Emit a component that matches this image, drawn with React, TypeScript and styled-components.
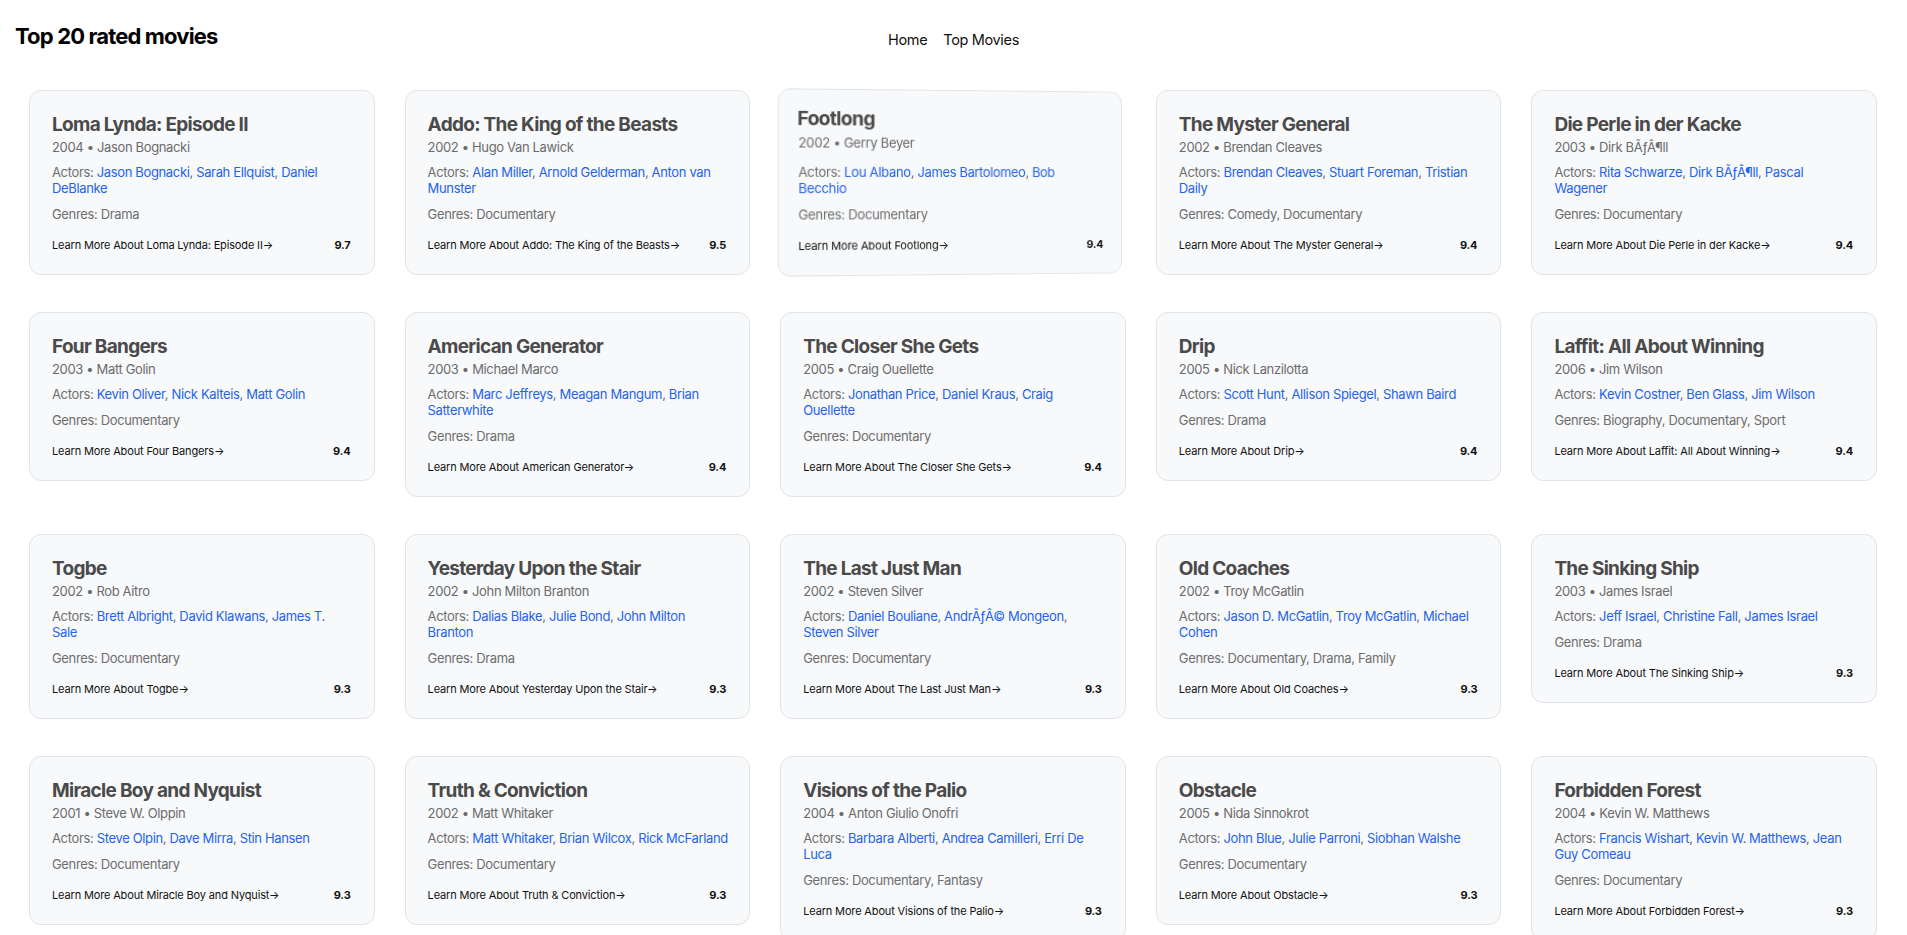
import React from 'react';
import styled, {createGlobalStyle} from 'styled-components';

const GlobalStyle = createGlobalStyle`
  html {
    scrollbar-width: none;
  }
  html::-webkit-scrollbar {
    display: none;
  }
  body {
    margin: 0;
    background: #FFFFFF;
    font-family: Inter, "Noto Sans", "Liberation Sans", sans-serif;
    color: #111111;
  }
`;

const Header = styled.header`
  display: grid;
  grid-template-columns: 1fr auto 1fr;
  align-items: start;
  padding: 0 15px;
  height: 90px;

  > h1 {
    margin: 23px 0 0;
    font-size: 22px;
    font-weight: 700;
    letter-spacing: -0.85px;
    color: #000000;
  }
`;

const Nav = styled.nav`
  display: flex;
  gap: 16px;
  margin-top: 31px;

  > a {
    font-size: 14.5px;
    letter-spacing: -0.35px;
    color: #111111;
    text-decoration: none;
  }
`;

const Grid = styled.main`
  display: grid;
  grid-template-columns: repeat(5, 1fr);
  column-gap: 30px;
  row-gap: 37px;
  align-items: start;
  padding: 0 30px 40px 29px;
`;

// the hovered card is shown tilted, as in the screenshot
const Card = styled.article<{ $tilted?: boolean }>`
  background: #F8F9FB;
  border: 1px solid #E2E3E6;
  border-radius: 12px;
  padding: 22px 20.75px 22px ${p => p.$tilted ? '19px' : '22px'};
  transform: ${p => p.$tilted ? 'perspective(1000px) rotateY(6deg)' : 'none'};
`;

const Title = styled.h2<{ $tilted?: boolean }>`
  margin: 0;
  font-size: 19px;
  line-height: 24px;
  font-weight: 700;
  letter-spacing: -0.7px;
  color: #4A4A4A;
  transform: ${p => p.$tilted ? 'translate(-1px, -5px)' : 'none'};
`;

const Meta = styled.p<{ $tilted?: boolean }>`
  margin: 2px 0 0;
  font-size: 13px;
  line-height: 16px;
  letter-spacing: -0.35px;
  color: #6B6B6B;
  transform: ${p => p.$tilted ? 'translateY(-4px)' : 'none'};
`;

const Info = styled.p`
  margin: 9px 0 0;
  font-size: 13px;
  line-height: 16px;
  letter-spacing: -0.35px;
  color: #6E6E6E;

  & + & {
    margin-top: 10px;
  }

  > a {
    color: #2563EB;
    text-decoration: none;
  }
`;

const Footer = styled.div<{ $tilted?: boolean }>`
  display: flex;
  justify-content: space-between;
  align-items: baseline;
  margin-top: 17px;
  margin-right: ${p => p.$tilted ? '-5px' : '0'};
  padding-right: 1.25px;
  font-size: 11px;
  line-height: 13px;
  letter-spacing: -0.15px;

  > a {
    color: #111111;
    text-decoration: none;
  }

  > b {
    font-weight: 700;
    color: #111111;
    margin-right: 1px;
  }
`;

type Movie = {
    title: string;
    year: number;
    director: string;
    actors: string[];
    genres: string;
    rating: string;
};

const movies: Movie[] = [
    {title: 'Loma Lynda: Episode II', year: 2004, director: 'Jason Bognacki', actors: ['Jason Bognacki', 'Sarah Ellquist', 'Daniel DeBlanke'], genres: 'Drama', rating: '9.7'},
    {title: 'Addo: The King of the Beasts', year: 2002, director: 'Hugo Van Lawick', actors: ['Alan Miller', 'Arnold Gelderman', 'Anton van Munster'], genres: 'Documentary', rating: '9.5'},
    {title: 'Footlong', year: 2002, director: 'Gerry Beyer', actors: ['Lou Albano', 'James Bartolomeo', 'Bob Becchio'], genres: 'Documentary', rating: '9.4'},
    {title: 'The Myster General', year: 2002, director: 'Brendan Cleaves', actors: ['Brendan Cleaves', 'Stuart Foreman', 'Tristian Daily'], genres: 'Comedy, Documentary', rating: '9.4'},
    {title: 'Die Perle in der Kacke', year: 2003, director: 'Dirk BÃƒÂ¶ll', actors: ['Rita Schwarze', 'Dirk BÃƒÂ¶ll', 'Pascal Wagener'], genres: 'Documentary', rating: '9.4'},
    {title: 'Four Bangers', year: 2003, director: 'Matt Golin', actors: ['Kevin Oliver', 'Nick Kalteis', 'Matt Golin'], genres: 'Documentary', rating: '9.4'},
    {title: 'American Generator', year: 2003, director: 'Michael Marco', actors: ['Marc Jeffreys', 'Meagan Mangum', 'Brian Satterwhite'], genres: 'Drama', rating: '9.4'},
    {title: 'The Closer She Gets', year: 2005, director: 'Craig Ouellette', actors: ['Jonathan Price', 'Daniel Kraus', 'Craig Ouellette'], genres: 'Documentary', rating: '9.4'},
    {title: 'Drip', year: 2005, director: 'Nick Lanzilotta', actors: ['Scott Hunt', 'Allison Spiegel', 'Shawn Baird'], genres: 'Drama', rating: '9.4'},
    {title: 'Laffit: All About Winning', year: 2006, director: 'Jim Wilson', actors: ['Kevin Costner', 'Ben Glass', 'Jim Wilson'], genres: 'Biography, Documentary, Sport', rating: '9.4'},
    {title: 'Togbe', year: 2002, director: 'Rob Aitro', actors: ['Brett Albright', 'David Klawans', 'James T. Sale'], genres: 'Documentary', rating: '9.3'},
    {title: 'Yesterday Upon the Stair', year: 2002, director: 'John Milton Branton', actors: ['Dalias Blake', 'Julie Bond', 'John Milton Branton'], genres: 'Drama', rating: '9.3'},
    {title: 'The Last Just Man', year: 2002, director: 'Steven Silver', actors: ['Daniel Bouliane', 'AndrÃƒÂ© Mongeon', 'Steven Silver'], genres: 'Documentary', rating: '9.3'},
    {title: 'Old Coaches', year: 2002, director: 'Troy McGatlin', actors: ['Jason D. McGatlin', 'Troy McGatlin', 'Michael Cohen'], genres: 'Documentary, Drama, Family', rating: '9.3'},
    {title: 'The Sinking Ship', year: 2003, director: 'James Israel', actors: ['Jeff Israel', 'Christine Fall', 'James Israel'], genres: 'Drama', rating: '9.3'},
    {title: 'Miracle Boy and Nyquist', year: 2001, director: 'Steve W. Olppin', actors: ['Steve Olpin', 'Dave Mirra', 'Stin Hansen'], genres: 'Documentary', rating: '9.3'},
    {title: 'Truth & Conviction', year: 2002, director: 'Matt Whitaker', actors: ['Matt Whitaker', 'Brian Wilcox', 'Rick McFarland'], genres: 'Documentary', rating: '9.3'},
    {title: 'Visions of the Palio', year: 2004, director: 'Anton Giulio Onofri', actors: ['Barbara Alberti', 'Andrea Camilleri', 'Erri De Luca'], genres: 'Documentary, Fantasy', rating: '9.3'},
    {title: 'Obstacle', year: 2005, director: 'Nida Sinnokrot', actors: ['John Blue', 'Julie Parroni', 'Siobhan Walshe'], genres: 'Documentary', rating: '9.3'},
    {title: 'Forbidden Forest', year: 2004, director: 'Kevin W. Matthews', actors: ['Francis Wishart', 'Kevin W. Matthews', 'Jean Guy Comeau'], genres: 'Documentary', rating: '9.3'},
];

const MovieCard: React.FunctionComponent<{ movie: Movie, tilted?: boolean }> = ({movie, tilted}) => {
    return (
        <Card $tilted={tilted}>
            <Title $tilted={tilted}>{movie.title}</Title>
            <Meta $tilted={tilted}>{movie.year} • {movie.director}</Meta>
            <Info>
                Actors:{' '}
                {movie.actors.map((a, i) => (
                    <React.Fragment key={a}>
                        <a href="#">{a}</a>{i < movie.actors.length - 1 ? ', ' : ''}
                    </React.Fragment>
                ))}
            </Info>
            <Info>Genres: {movie.genres}</Info>
            <Footer $tilted={tilted}>
                <a href="#">Learn More About {movie.title}→</a>
                <b>{movie.rating}</b>
            </Footer>
        </Card>
    );
};

const App: React.FunctionComponent = () => {
    return (
        <>
            <GlobalStyle/>
            <Header>
                <h1>Top 20 rated movies</h1>
                <Nav>
                    <a href="#">Home</a>
                    <a href="#">Top Movies</a>
                </Nav>
                <div/>
            </Header>
            <Grid>
                {movies.map((m, i) => <MovieCard key={m.title} movie={m} tilted={i === 2}/>)}
            </Grid>
        </>
    );
};

export default App;
